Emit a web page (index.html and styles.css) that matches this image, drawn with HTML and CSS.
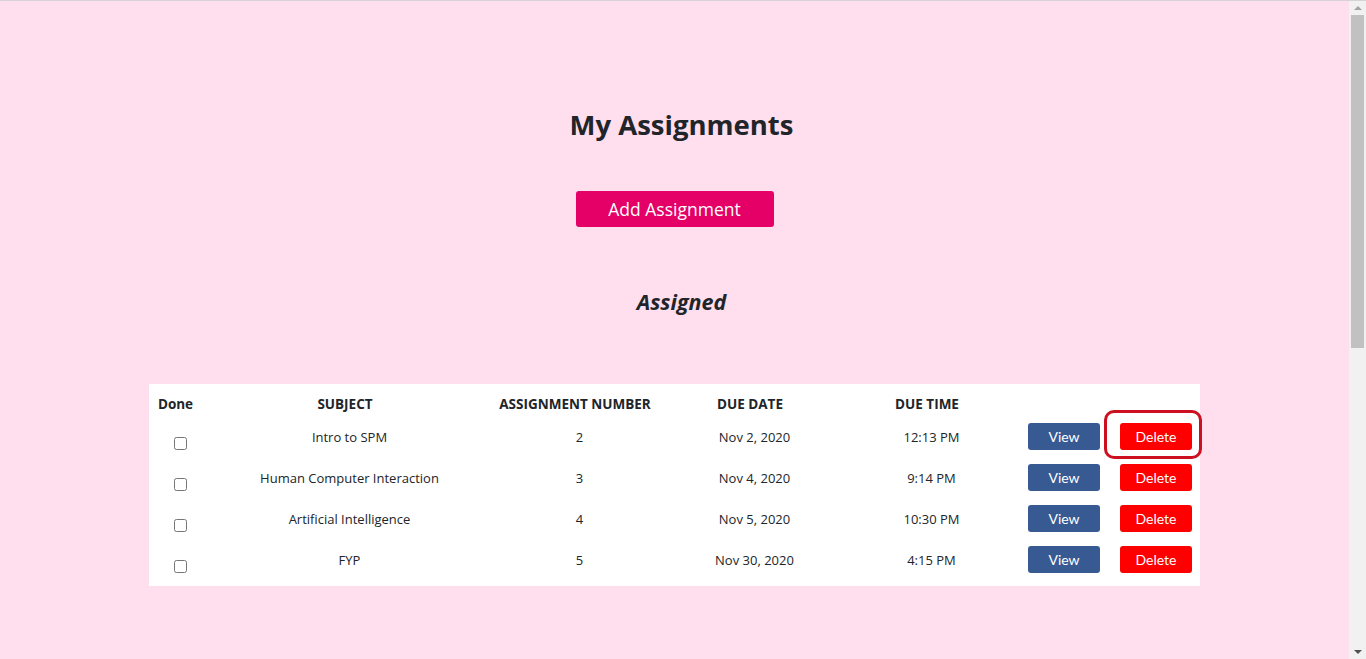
FILE: index.html
```html
<!DOCTYPE html>
<html lang="en">
<head>
<meta charset="utf-8">
<title>My Assignments</title>
<link rel="stylesheet" href="styles.css">
</head>
<body>
<main class="page">
  <h1 class="title">My Assignments</h1>
  <div class="add-wrap"><button class="btn-add">Add Assignment</button></div>
  <h2 class="subtitle">Assigned</h2>
  <table class="tasks">
    <colgroup>
      <col class="c1"><col class="c2"><col class="c3"><col class="c4"><col class="c5"><col class="c6"><col class="c7">
    </colgroup>
    <thead>
      <tr>
        <th>Done</th>
        <th>SUBJECT</th>
        <th>ASSIGNMENT NUMBER</th>
        <th>DUE DATE</th>
        <th>DUE TIME</th>
        <th></th>
        <th></th>
      </tr>
    </thead>
    <tbody>
      <tr>
        <td><input type="checkbox"></td>
        <td>Intro to SPM</td>
        <td>2</td>
        <td>Nov 2, 2020</td>
        <td>12:13 PM</td>
        <td><button class="btn btn-view">View</button></td>
        <td class="del-cell"><button class="btn btn-delete">Delete</button><span class="highlight"></span></td>
      </tr>
      <tr>
        <td><input type="checkbox"></td>
        <td>Human Computer Interaction</td>
        <td>3</td>
        <td>Nov 4, 2020</td>
        <td>9:14 PM</td>
        <td><button class="btn btn-view">View</button></td>
        <td><button class="btn btn-delete">Delete</button></td>
      </tr>
      <tr>
        <td><input type="checkbox"></td>
        <td>Artificial Intelligence</td>
        <td>4</td>
        <td>Nov 5, 2020</td>
        <td>10:30 PM</td>
        <td><button class="btn btn-view">View</button></td>
        <td><button class="btn btn-delete">Delete</button></td>
      </tr>
      <tr>
        <td><input type="checkbox"></td>
        <td>FYP</td>
        <td>5</td>
        <td>Nov 30, 2020</td>
        <td>4:15 PM</td>
        <td><button class="btn btn-view">View</button></td>
        <td><button class="btn btn-delete">Delete</button></td>
      </tr>
    </tbody>
  </table>
</main>
<aside class="scrollbar">
  <div class="sb-btn"><span class="arrow-up"></span></div>
  <div class="sb-track"><div class="sb-thumb"></div></div>
  <div class="sb-btn"><span class="arrow-down"></span></div>
</aside>
</body>
</html>
```

FILE: styles.css
```css
html {
  border-top: 1px solid #d4d4d4;
  background: #ffdfee;
  overflow: hidden;
}
body {
  margin: 0;
  height: 658px;
  display: flex;
  background: #ffdfee;
  font-family: "Open Sans", "Noto Sans", sans-serif;
  color: #212529;
  overflow: hidden;
}
.page {
  flex: 1;
  display: flex;
  flex-direction: column;
  align-items: center;
  padding-top: 104px;
}
.title {
  margin: 0;
  font-size: 27.5px;
  font-weight: 700;
  line-height: 40px;
  padding-left: 14px;
}
.add-wrap { margin-top: 46px; }
.btn-add {
  width: 198px;
  height: 36px;
  border: 0;
  border-radius: 3px;
  background: #e40066;
  color: #fff;
  font-family: "Open Sans", sans-serif;
  font-size: 17.5px;
  cursor: pointer;
}
.subtitle {
  margin: 61px 0 0;
  font-size: 21.5px;
  font-style: italic;
  font-weight: 700;
  line-height: 28px;
  padding-left: 14px;
}
.tasks {
  margin-top: 76px;
  width: 1051px;
  table-layout: fixed;
  border-collapse: collapse;
  background: #fff;
  font-size: 13px;
  box-shadow: 0 -8px 0 #fff, 0 6px 0 #fff;
}
.c1 { width: 53px; }
.c2 { width: 286px; }
.c3 { width: 174px; }
.c4 { width: 176px; }
.c5 { width: 178px; }
.c6 { width: 87px; }
.c7 { width: 97px; }
.tasks th {
  height: 24px;
  padding: 0;
  font-size: 13.5px;
  font-weight: 700;
  text-align: center;
  vertical-align: middle;
}
.tasks td {
  height: 41px;
  padding: 0 0 0 9px;
  text-align: center;
  vertical-align: middle;
  box-sizing: border-box;
}
.tasks input[type="checkbox"] {
  width: 13px;
  height: 13px;
  margin: 17px 0 0;
}
.btn {
  width: 72px;
  height: 27px;
  border: 0;
  border-radius: 3px;
  color: #fff;
  font-family: Lato, sans-serif;
  font-size: 14px;
  cursor: pointer;
}
.btn-view { background: #375a93; }
.btn-delete { background: #ff0000; }
.del-cell { position: relative; }
.highlight {
  position: absolute;
  left: 1px;
  top: -6px;
  width: 92px;
  height: 43px;
  border: 3px solid #cc1020;
  border-radius: 10px;
  pointer-events: none;
}
.scrollbar {
  width: 17px;
  flex: none;
  display: flex;
  flex-direction: column;
  background: #f1f1f1;
}
.sb-btn {
  height: 14px;
  flex: none;
  display: flex;
  align-items: center;
  justify-content: center;
}
.sb-track {
  flex: 1;
  padding: 0 2px;
}
.sb-thumb {
  height: 333px;
  background: #c1c1c1;
}
.arrow-up {
  width: 0;
  height: 0;
  border-left: 4px solid transparent;
  border-right: 4px solid transparent;
  border-bottom: 4px solid #a3a3a3;
}
.arrow-down {
  width: 0;
  height: 0;
  border-left: 4px solid transparent;
  border-right: 4px solid transparent;
  border-top: 4px solid #505050;
}
```
